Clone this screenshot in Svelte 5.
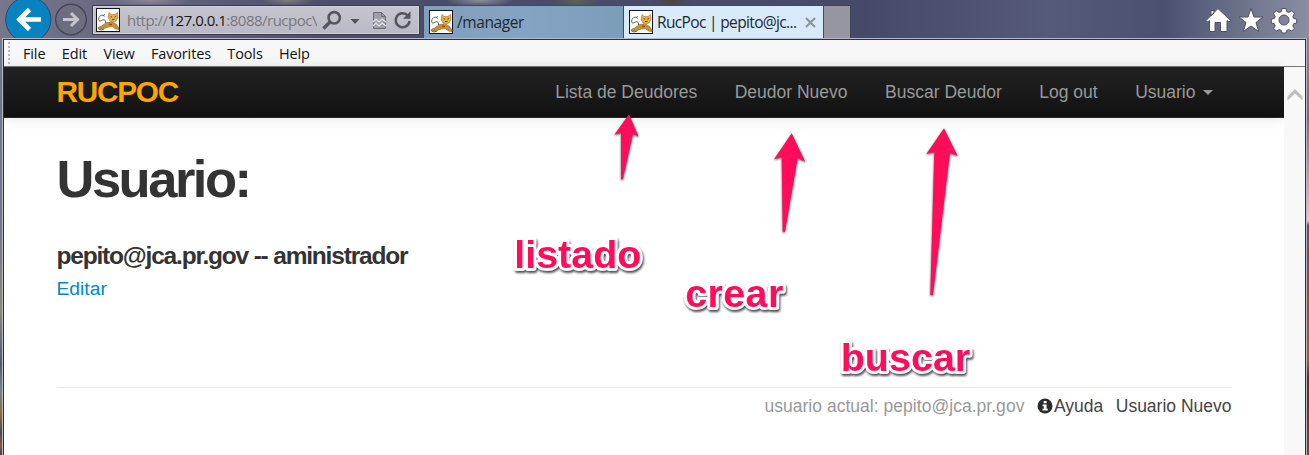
<script>
  const menus = ['File', 'Edit', 'View', 'Favorites', 'Tools', 'Help'];
  const links = ['Lista de Deudores', 'Deudor Nuevo', 'Buscar Deudor', 'Log out'];
</script>

{#snippet cat()}
  <svg class="cat" viewBox="0 0 24 24" width="24" height="24">
    <rect x=".5" y=".5" width="23" height="23" fill="#fff" stroke="#16171c" />
    <path d="M9.500 15C10 12 8 11 5.500 12.500S2 12 3 9.500 7 6.500 8.500 8.500M7 7.500l2-1M2 20.500l3 1.500 3-1" fill="none" stroke="#4c4b49" stroke-width=".9" />
    <path d="M13 4.500l2.200 2h3.600l2.700-2 .5 5-2 3.500-2.500 1-3.500-1-2-3.500z" fill="#e2b04c" stroke="#a77525" stroke-width=".6" />
    <path d="M2 19.500l3.500-1.500 5-3.500 5-.5 4.500 2 3 4v1.500l-3.500-.5-3-2.500-4 .5-4.500 1.500-5 .5z" fill="#c78f33" stroke="#8b6425" stroke-width=".6" />
    <path d="M14.500 8.500l1.500.7M18.500 9.200l1.500-.7M16 11.500h2.500M13 16l3 .5" stroke="#593b14" stroke-width=".9" />
  </svg>
{/snippet}

<div class="window">
  <header class="chrome">
    <svg class="nav-buttons" width="92" height="38" viewBox="0 0 92 38">
      <circle cx="28.3" cy="19.5" r="22.6" fill="#0883c2" stroke="#314666" stroke-width="1" />
      <path d="M41 19.500H19M29.500 9.500l-10 10 10 10" fill="none" stroke="#fff" stroke-width="4.6" />
      <circle cx="71" cy="19.5" r="15.3" fill="#6d6d80" stroke="#43445a" stroke-width="1.4" />
      <path d="M63 19.500h14M71 13l6.500 6.500-6.500 6.500" fill="none" stroke="#c5c5cc" stroke-width="3" />
    </svg>
    <div class="address">
      {@render cat()}
      <span class="url">http://<b>127.0.0.1</b>:8088/rucpoc\</span>
      <svg width="94" height="28" viewBox="323 6 94 28" fill="none" stroke="#55555c">
        <circle cx="335.200" cy="17.800" r="5.700" stroke-width="2.600" />
        <path d="M331 22l-6.500 6.500" stroke-width="3.400" />
        <path d="M351.500 19h9l-4.500 5z" fill="#55555c" stroke="none" />
        <path d="M374.500 12.500h8l4 4v12h-12z" fill="#a0a0aa" stroke="#6c6c74" />
        <path d="M374 22l3-3 3 3 3-3 4 3M374 26l3-3 3 3 3-3 4 3" stroke="#e4e4e8" stroke-width="1.200" />
        <path d="M382.500 12.500v4h4" stroke="#6c6c74" />
        <path d="M408.800 15.500a7 7 0 1 0 1.800 5.500" stroke-width="2.500" />
        <path d="M404 18.700h7.500v-7.500z" fill="#55555c" stroke="none" />
      </svg>
    </div>
    <div class="tab inactive">{@render cat()}<span class="title manager">/manager</span></div>
    <div class="tab active">
      {@render cat()}<span class="title current">RucPoc | pepito@jc...</span>
      <svg width="11" height="11" viewBox="0 0 11 11"><path d="M1 1l9 9M10 1l-9 9" stroke="#8c969f" stroke-width="2.200" /></svg>
    </div>
    <div class="new-tab"></div>
    <svg class="tools" width="96" height="38" viewBox="1203 0 96 38" fill="#fff" stroke="#4c5068" stroke-width="1" stroke-linejoin="round">
      <path d="M1218 8.500l-12 12 1.500 1.500 2-1.500v11h5.500v-9h5.500v9h6.500v-11l2 1.500 1.500-1.500-12.500-12zM1211 10.500h3v2.500l-3 3z" />
      <path d="M1251 8.500l3 8.500h9l-7 5.500 2.700 9-7.700-5.500-7.700 5.500 2.700-9-7-5.500h9z" />
      <g transform="translate(1284 20)">
        <path fill-rule="evenodd" d="M-2-11.500h4l.700 3 2 .9 2.900-1.600 2.800 2.800-1.600 2.900.9 2 3 .7v4l-3 .5-.9 2 1.600 2.600-2.800 2.800-2.900-1.600-2 .9-.7 2.600h-4l-.700-2.600-2-.9-2.900 1.600-2.800-2.800 1.600-2.600-.9-2-3-.5v-4l3-.7.9-2-1.600-2.900 2.800-2.800 2.900 1.600 2-.9zM5 0A5 5 0 1 0-5 0 5 5 0 1 0 5 0z" />
      </g>
    </svg>
  </header>

  <div class="frame">
    <nav class="menubar">
      <i class="grip"></i>
      {#each menus as m}<span>{m}</span>{/each}
    </nav>
    <div class="viewport">
      <div class="page">
        <div class="navbar">
          <strong>RUCPOC</strong>
          <ul>
            {#each links as l}<li>{l}</li>{/each}
            <li class="drop">Usuario<i></i></li>
          </ul>
        </div>
        <main>
          <h1>Usuario:</h1>
          <h2>pepito@jca.pr.gov -- aministrador</h2>
          <span class="edit">Editar</span>
          <footer>
            <span class="muted">usuario actual: pepito@jca.pr.gov</span>
            <span class="help">
              <svg width="16" height="16" viewBox="0 0 16 16"><circle cx="8" cy="8" r="7.500" fill="#2b2b2b" /><path d="M6.700 3h2.900v2.200H6.700zM5.600 6.500h4v4.300h1.200v1.700H5.500v-1.700h1.300V8.200H5.600z" fill="#fff" /></svg>Ayuda
            </span>
            <span>Usuario Nuevo</span>
          </footer>
        </main>
      </div>
      <aside class="scrollbar">
        <svg width="16" height="13" viewBox="0 0 16 13"><path d="M.5 8.500L8 1l7.500 7.500v4L8 5.500.5 12.500z" fill="#bfbfbf" /></svg>
      </aside>
    </div>
  </div>

  <svg class="notes" width="1309" height="455" viewBox="0 0 1309 455">
    <g class="arrows">
      <path d="M629 114.300L614.300 134.700l6.700-2L621 179.300h1.900L633 133.700l5.700 3z" />
      <path d="M791.700 133.300L774 159.300l7.700-2.300 1 74.700h2.300L797.700 158l7.600 3.700z" />
      <path d="M944 128.300L926.300 154l8-2-4 143h2.700L950 152.700l7.700 3.300z" />
    </g>
    <g class="words">
      <text x="514.200" y="267.700">listado</text>
      <text x="685.300" y="306.700" textLength="98">crear</text>
      <text x="840.700" y="371">buscar</text>
    </g>
  </svg>
</div>

<style>
  :global(body) { margin: 0; overflow: hidden; }
  .window {
    position: relative; width: 1309px; height: 455px; overflow: hidden;
    display: flex; flex-direction: column;
    font-family: "Liberation Sans", Arial, sans-serif; font-size: 17.5px;
    background:
      linear-gradient(#8a8ea3, #666e96 26%, #c3c6d2 46%, #d0d2da 48.500%, #465884 49.500%, #505a82 58%, #8d5321 65%, #91672a 79%, #49352f 83%, #6b4738) right / 4px 100% no-repeat,
      linear-gradient(#777b93, #73758a 48%, #8b8a78 68%, #505b70 80%, #7c8386 86%, #8f6a37 91%, #51484d 95%, #805b3d 98%, #4e3c40);
  }
  .chrome {
    height: 38px; display: flex; align-items: flex-start;
    background:
      radial-gradient(ellipse 34px 7px at 480px 0, #8d919a, transparent),
      radial-gradient(ellipse 24px 9px at 577px 0, #5b6550, transparent),
      radial-gradient(ellipse 20px 8px at 672px 0, #49453c, transparent),
      radial-gradient(ellipse 26px 6px at 288px 0, #807f83, transparent),
      radial-gradient(ellipse 40px 8px at 150px 0, #8e8796, transparent),
      linear-gradient(90deg, #77778c, #686980 8%, #4d4e6b 25%, #494b69 48%, #464967 66%, #555a78 80%, #4b5070 89%, #747990 96%, #898ea1);
  }
  .nav-buttons { flex: none; }
  .address {
    box-sizing: border-box; width: 328px; height: 30px; margin-top: 5px; padding: 2px 2px 0 3px;
    border: 1px solid #3c3d52; display: flex; align-items: flex-start;
    background: linear-gradient(#c6c6d0, #b9b9c5); overflow: hidden;
    box-shadow: inset 0 0 0 1px #d0d0d9;
  }
  .cat { flex: none; display: block; }
  .url {
    font: 15px/24px "Open Sans", sans-serif; color: #77777f; white-space: nowrap;
    margin-left: 7px; width: 190px; flex: none; letter-spacing: -.5px; overflow: hidden;
  }
  .url b { font-weight: 400; color: #17171b; }
  .address svg:last-child { margin-left: 5px; margin-top: -2px; flex: none; }
  .tab {
    box-sizing: border-box; height: 33px; margin-top: 5px; display: flex; align-items: flex-start;
    border: 1px solid #3d4c66; border-bottom: 0; padding: 4px 0 0 5px;
  }
  .inactive { width: 201px; margin-left: 3px; background: linear-gradient(90deg, #819fbc, #85a3c2 50%, #7c9dba); }
  .active { width: 200px; background: #d8eafa; border-left: 0; }
  .title { font: 15.500px/25px "Open Sans", sans-serif; white-space: nowrap; margin-left: 4px; color: #202832; }
  .manager { letter-spacing: -.4px; }
  .current { width: 139px; letter-spacing: -.65px; }
  .active svg:last-child { margin: 7px 0 0 9px; flex: none; }
  .new-tab { box-sizing: border-box; width: 27px; height: 33px; margin-top: 5px; background: #9696a3; border: 1px solid #404257; border-left: 0; border-bottom: 0; }
  .tools { margin-left: auto; margin-right: 10px; }
  .frame {
    flex: 1; width: 1301px; margin-left: 3px; border: 1px solid #2e3040; border-bottom: 0;
    box-shadow: 0 0 0 1px #b7b9c4; margin-top: 1px; display: flex; flex-direction: column;
  }
  .menubar {
    box-sizing: border-box; height: 27px; background: #f7f7f7; border-bottom: 1px solid #777;
    display: flex; font: 14.500px/27px "Open Sans", sans-serif; color: #111;
  }
  .grip { width: 2px; margin: 2px 13px 0 4px; background: repeating-linear-gradient(#bbb 0 2px, transparent 2px 4px); }
  .menubar span { margin-right: 16.400px; letter-spacing: -.14px; }
  .viewport { flex: 1; display: flex; background: #fff; }
  .page { width: 1280px; }
  .navbar {
    height: 50px; border-bottom: 1px solid #252525; background: linear-gradient(#222, #111);
    box-shadow: 0 1px 12px rgba(0, 0, 0, .1); display: flex; justify-content: space-between;
    padding: 0 70.500px 0 52.500px;
  }
  .navbar strong { font-size: 29.750px; line-height: 50px; letter-spacing: -1.250px; color: #ffa500; }
  .navbar ul { display: flex; gap: 37.500px; list-style: none; margin: 0; padding: 0; color: #999; line-height: 50px; white-space: nowrap; }
  .drop i { display: inline-block; border: 5px solid transparent; border-top-color: #999; border-bottom: 0; margin: 0 1px 0 7px; vertical-align: 3px; }
  main { padding: 0 52.500px; color: #333; }
  h1 { margin: 35px 0 0; font-size: 52.500px; line-height: 52px; letter-spacing: -2.500px; }
  h2 { margin: 38px 0 0; font-size: 24.500px; line-height: 26px; letter-spacing: -1.190px; }
  .edit { display: block; margin-top: 7px; font-size: 19.250px; line-height: 25px; color: #08c; }
  footer {
    margin-top: 86px; border-top: 1px solid #eaeaea; display: flex; justify-content: flex-end;
    gap: 12.500px; line-height: 36px; white-space: nowrap; color: #444; width: 1175px;
  }
  .muted { color: #999; letter-spacing: .03px; }
  .help { display: flex; align-items: center; }
  .help svg { margin-right: 1px; }
  .scrollbar { width: 21px; background: #f8f8f8; }
  .scrollbar svg { display: block; margin: 21px 0 0 3px; }
  .notes { position: absolute; left: 0; top: 0; }
  .arrows { fill: #ff0d5b; filter: drop-shadow(0 1px 1px rgba(0, 0, 0, .65)); }
  .words {
    font: bold 39.500px "Liberation Sans", Arial, sans-serif; fill: #ff0d5b; stroke: #fff; stroke-width: 6px;
    stroke-linejoin: round; paint-order: stroke; filter: drop-shadow(1px 2px 1.300px rgba(0, 0, 0, .7));
  }
</style>
